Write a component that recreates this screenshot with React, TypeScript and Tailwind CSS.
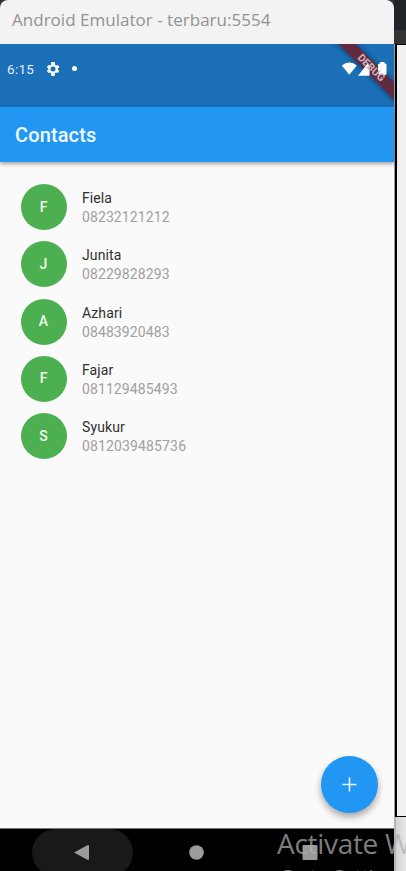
const contacts = [
  { name: "Fiela", phone: "08232121212", width: 87.5 },
  { name: "Junita", phone: "08229828293", width: 87.5 },
  { name: "Azhari", phone: "08483920483", width: 87.5 },
  { name: "Fajar", phone: "081129485493", width: 95.5 },
  { name: "Syukur", phone: "0812039485736", width: 104 },
];

function TitleBar() {
  return (
    <div className="h-[44px] shrink-0 rounded-t-[8px] bg-[#f3f3f3] pl-3 pt-[8px] font-['Open_Sans','Noto_Sans',sans-serif] text-[17px] leading-[24px] tracking-[0.02px] text-[#929292] whitespace-nowrap">
      Android Emulator - terbaru:5554
    </div>
  );
}

function StatusBar() {
  return (
    <div className="relative flex h-[63px] shrink-0 items-start overflow-hidden bg-[#1b70b7] pl-[7px] pt-[17px] text-[#e4eff8]">
      <span className="w-[28px] text-[13.5px] leading-[17px] tracking-[0.3px]">6:15</span>
      <svg className="ml-[11px] mt-[1px] h-[14px] w-[14px]" viewBox="2 2 20 20" fill="#fff">
        <path d="M19.14 12.94c.04-.3.06-.61.06-.94s-.02-.64-.07-.94l2.03-1.58-1.92-3.32-2.39.96c-.5-.38-1.03-.7-1.62-.94L14.4 2h-4.8l-.45 4.18c-.59.24-1.13.57-1.62.94l-2.39-.96-1.92 3.32 2.03 1.58a7.4 7.4 0 0 0 0 1.88l-2.03 1.58 1.92 3.32 2.39-.96c.5.38 1.03.7 1.62.94L9.6 22h4.8l.45-4.18c.59-.24 1.13-.56 1.62-.94l2.39.96 1.92-3.32zM12 15.6a3.6 3.6 0 1 1 0-7.2 3.6 3.6 0 0 1 0 7.2z" />
      </svg>
      <span className="ml-[12px] mt-[5px] h-[5px] w-[5px] rounded-full bg-white" />
      <div className="absolute left-[310.5px] top-[17.5px] h-[12px] w-[120px] rotate-45 bg-[#622a3f] shadow-[0_0_6px_rgba(0,0,0,0.5)]" />
      <svg className="absolute left-[341px] top-[17px]" width="48" height="16" viewBox="0 0 48 16" fill="#fff">
        <path d="M0.8 4.5Q8.3-1.5 15.8 4.5L8.3 13.8z" />
        <path d="M17 14.8L27 2L28.5 6V14.8z" />
        <path d="M37 4Q37 2.5 38.5 2.5H39V1H43.5V2.5H44.5Q45.5 2.5 45.5 4V12.5Q45.5 14 44 14H39L37 12z" />
      </svg>
      <div className="absolute left-[310.5px] top-[17.5px] h-[12px] w-[120px] rotate-45 text-center text-[10.5px] font-bold leading-[12.5px] text-[#cbb6bf]">
        DEBUG
      </div>
    </div>
  );
}

function ContactList() {
  return (
    <div className="flex flex-1 flex-col bg-[#fafafa] pl-[21px] pt-[22px]">
      {contacts.map((c) => (
        <div key={c.phone} className="flex h-[57.25px] shrink-0 items-start">
          <div className="flex h-[46px] w-[46px] items-center justify-center rounded-full bg-[#4caf50] pr-px text-[14px] font-medium text-[#f2fff2]">
            {c.name[0]}
          </div>
          <div className="ml-[15px] flex flex-col pt-[5px]">
            <span className="h-[18px] text-[14px] leading-[19px] tracking-[0.1px] text-[#303030]">{c.name}</span>
            <svg className="h-[19px] overflow-visible" width={c.width} height="19">
              <text x="0" y="14.5" textLength={c.width} fontSize="14" fill="#a0a0a0">
                {c.phone}
              </text>
            </svg>
          </div>
        </div>
      ))}
    </div>
  );
}

function NavBar() {
  return (
    <div className="relative h-[43px] shrink-0 overflow-hidden border-t border-[#777] bg-black">
      <div className="absolute left-[32px] top-0 h-[47px] w-[101px] rounded-[24px] bg-[#191919]" />
      <svg className="absolute left-0 top-0" width="394" height="42" fill="#9b9b9b">
        <path d="M74 23.5L87 16.5Q89 15.5 89 17V30Q89 31.5 87 30.5z" />
        <circle cx="196.5" cy="23.5" r="7.3" />
        <rect x="302.5" y="16" width="15" height="15" rx="1" />
      </svg>
    </div>
  );
}

export default function App() {
  return (
    <div className="relative flex h-[871px] w-[406px] overflow-hidden bg-[#333] font-[Roboto,sans-serif]">
      <div className="z-10 flex w-[394px] shrink-0 flex-col">
        <TitleBar />
        <StatusBar />
        <div className="z-10 flex h-[55px] shrink-0 items-center bg-[#2196f3] pl-[15px] pt-px text-[20px] font-medium leading-[28px] tracking-[0.12px] text-[#f3faff] shadow-[0_2px_4px_rgba(0,0,0,0.35)]">
          Contacts
        </div>
        <ContactList />
        <NavBar />
      </div>
      <div className="flex flex-1 flex-col">
        <div className="h-[30px] shrink-0 bg-[#202327]" />
        <div className="h-[14px] shrink-0 bg-[#333]" />
        <div className="flex h-[773px] shrink-0">
          <div className="w-px bg-[#999]" />
          <div className="flex-1 border-y border-l-2 border-black bg-[#f0f0f0]" />
        </div>
        <div className="flex-1 border-l-2 border-[#b5b5b5] bg-linear-to-r from-[#d2d2d2] to-[#e8e8e8]" />
      </div>
      <button aria-label="Add contact" className="absolute left-[321px] top-[756px] z-20 flex h-[57px] w-[57px] items-center justify-center rounded-full bg-[#2196f3] shadow-[0_4px_7px_rgba(0,0,0,0.35)]">
        <svg width="15" height="15" stroke="#e6f4ff" strokeWidth="1.6">
          <path d="M7.5 .5V14.5M.5 7.5H14.5" />
        </svg>
      </button>
      <div className="absolute left-[277px] top-[828px] z-30 whitespace-nowrap font-['Open_Sans','Noto_Sans',sans-serif] text-[28px] leading-[30px] tracking-[-0.3px] text-[#afafaf]/73">
        Activate Windows
        <div className="mt-[7px] pl-[2px] text-[20px] leading-[24px]">Go to Settings to activate Windows.</div>
      </div>
    </div>
  );
}
